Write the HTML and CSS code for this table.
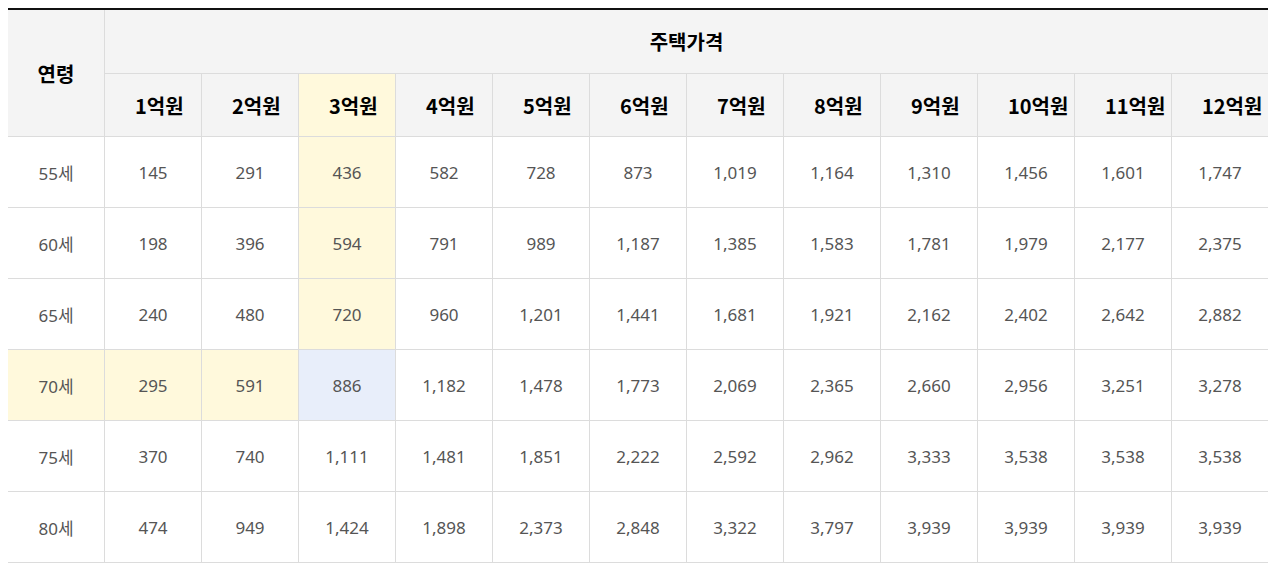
FILE: index.html
```html
<!DOCTYPE html>
<html lang="ko">
<head>
<meta charset="utf-8">
<title>주택가격</title>
<link rel="stylesheet" href="styles.css">
</head>
<body>
<table class="price-table">
  <colgroup>
    <col class="col-age">
    <col span="12">
  </colgroup>
  <thead>
    <tr class="head-row1">
      <th rowspan="2" class="age-head">연령</th>
      <th colspan="12" class="group-head">주택가격</th>
    </tr>
    <tr class="head-row2">
      <th class="price-head">1억원</th>
      <th class="price-head">2억원</th>
      <th class="price-head hl-yellow">3억원</th>
      <th class="price-head">4억원</th>
      <th class="price-head">5억원</th>
      <th class="price-head">6억원</th>
      <th class="price-head">7억원</th>
      <th class="price-head">8억원</th>
      <th class="price-head">9억원</th>
      <th class="price-head">10억원</th>
      <th class="price-head">11억원</th>
      <th class="price-head">12억원</th>
    </tr>
  </thead>
  <tbody>
    <tr>
      <td class="age">55세</td><td>145</td><td>291</td><td class="hl-yellow">436</td><td>582</td><td>728</td><td>873</td><td>1,019</td><td>1,164</td><td>1,310</td><td>1,456</td><td>1,601</td><td>1,747</td>
    </tr>
    <tr>
      <td class="age">60세</td><td>198</td><td>396</td><td class="hl-yellow">594</td><td>791</td><td>989</td><td>1,187</td><td>1,385</td><td>1,583</td><td>1,781</td><td>1,979</td><td>2,177</td><td>2,375</td>
    </tr>
    <tr>
      <td class="age">65세</td><td>240</td><td>480</td><td class="hl-yellow">720</td><td>960</td><td>1,201</td><td>1,441</td><td>1,681</td><td>1,921</td><td>2,162</td><td>2,402</td><td>2,642</td><td>2,882</td>
    </tr>
    <tr>
      <td class="age hl-yellow">70세</td><td class="hl-yellow">295</td><td class="hl-yellow">591</td><td class="hl-blue">886</td><td>1,182</td><td>1,478</td><td>1,773</td><td>2,069</td><td>2,365</td><td>2,660</td><td>2,956</td><td>3,251</td><td>3,278</td>
    </tr>
    <tr>
      <td class="age">75세</td><td>370</td><td>740</td><td>1,111</td><td>1,481</td><td>1,851</td><td>2,222</td><td>2,592</td><td>2,962</td><td>3,333</td><td>3,538</td><td>3,538</td><td>3,538</td>
    </tr>
    <tr>
      <td class="age">80세</td><td>474</td><td>949</td><td>1,424</td><td>1,898</td><td>2,373</td><td>2,848</td><td>3,322</td><td>3,797</td><td>3,939</td><td>3,939</td><td>3,939</td><td>3,939</td>
    </tr>
  </tbody>
</table>
</body>
</html>
```
FILE: styles.css
```css
html, body {
  margin: 0;
  padding: 0;
  background: #fff;
}
body {
  padding: 8px;
  font-family: "Noto Sans", "Noto Sans CJK KR", sans-serif;
}
.price-table {
  width: 1260px;
  table-layout: fixed;
  border-collapse: separate;
  border-spacing: 0;
  border-top: 2px solid #111;
}
.col-age {
  width: 96px;
}
.price-table th,
.price-table td {
  padding: 0;
  border-bottom: 1px solid #dcdcdc;
  border-left: 1px solid #dcdcdc;
  text-align: center;
  vertical-align: middle;
  white-space: nowrap;
  box-sizing: border-box;
}
.price-table th:first-child,
.price-table td:first-child {
  border-left: none;
}
.price-table th {
  background: #f4f4f4;
  color: #000;
  font-family: "Noto Sans CJK KR", sans-serif;
  font-weight: 700;
  font-size: 20px;
}
.price-table .head-row2 th:first-child {
  border-left: 1px solid #dcdcdc;
}
.head-row1 th {
  height: 64px;
}
.head-row2 th {
  height: 63px;
}
.price-table .price-head {
  padding: 0 18px 0 30px;
}
.price-table td {
  height: 71px;
  font-size: 17px;
  color: #555;
}
.price-table .hl-yellow {
  background: #fff9dc;
}
.price-table .hl-blue {
  background: #e8eefa;
}
```
